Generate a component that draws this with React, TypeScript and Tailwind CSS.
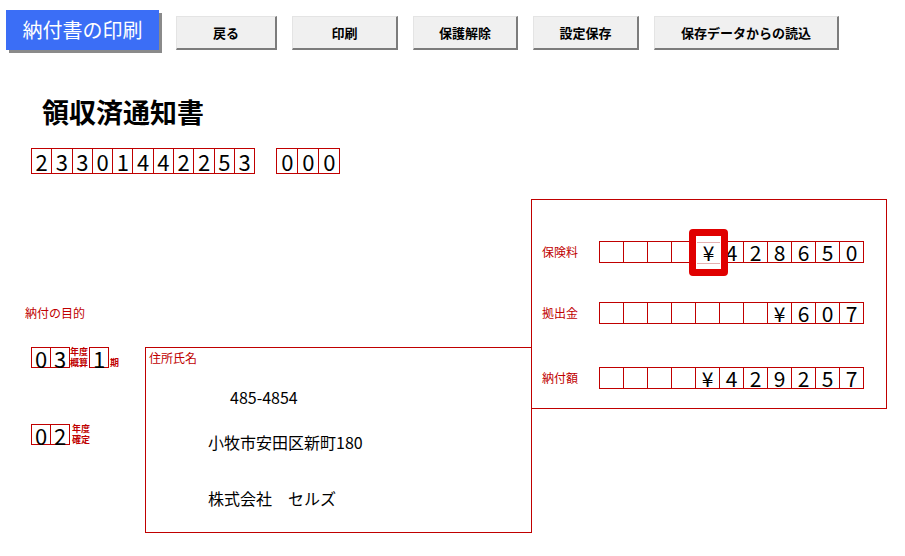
const jp = { fontFamily: '"Noto Sans CJK JP", "Noto Sans", sans-serif' };

function Cells({ values, w, h, size }: { values: string[]; w: string; h: string; size: string }) {
  return (
    <div className="flex">
      {values.map((v, i) => (
        <div
          key={i}
          className={`${w} ${h} ${size} -ml-px first:ml-0 border border-[#c00000] flex items-center justify-center leading-none text-black`}
        >
          {v}
        </div>
      ))}
    </div>
  );
}

const buttons = [
  { label: "戻る", w: "w-[101px]" },
  { label: "印刷", w: "w-[106px]" },
  { label: "保護解除", w: "w-[105px]" },
  { label: "設定保存", w: "w-[106px]" },
  { label: "保存データからの読込", w: "w-[185px]" },
];

function AmountRow({ label, values, mt, highlight }: { label: string; values: string[]; mt: string; highlight?: boolean }) {
  return (
    <div className={`${mt} flex items-center`}>
      <div className="w-[67px] pl-[10px] text-[12px] text-[#c00000] leading-none">{label}</div>
      <div className="relative">
        <Cells values={values} w="w-[25px]" h="h-[22px]" size="text-[21px]" />
        {highlight && (
          <div className="absolute left-[90px] top-[-12px] w-[39px] h-[47px] rounded-[4px] border-[7px] border-[#e00000] bg-white flex items-center justify-center">
            <div className="w-[23px] h-[22px] border-y border-[#e5b0b0] flex items-center justify-center text-[21px] leading-none">¥</div>
          </div>
        )}
      </div>
    </div>
  );
}

function Tiny({ lines, className }: { lines: string[]; className?: string }) {
  return (
    <div className={`font-['Liberation_Sans','Noto_Sans_CJK_JP',sans-serif] text-[9px] leading-[10.5px] font-bold text-[#c00000] ${className ?? ""}`}>
      {lines.map((l) => (
        <div key={l}>{l}</div>
      ))}
    </div>
  );
}

export default function App() {
  return (
    <div className="w-[905px] h-[556px] bg-white overflow-hidden" style={jp}>
      <div className="flex items-start pt-[10px] pl-[6px]">
        <div className="w-[153px] h-[40px] bg-[#3b6ef6] shadow-[3px_3px_0_#8a8a8a] flex items-center justify-center text-white text-[20px]">
          納付書の印刷
        </div>
        <div className="flex gap-[15px] ml-[17px] mt-[6px]">
          {buttons.map((b) => (
            <div
              key={b.label}
              className={`${b.w} h-[34px] bg-[#f0f0f0] border-t border-l border-[#e4e4e4] border-r-2 border-b-2 border-r-[#7c7c7c] border-b-[#7c7c7c] flex items-center justify-center text-[13px] font-bold text-black`}
            >
              {b.label}
            </div>
          ))}
        </div>
      </div>

      <div className="mt-[47px] pl-[42px] text-[27px] leading-[30px] font-bold text-black">領収済通知書</div>

      <div className="mt-[21px] pl-[31px] flex gap-[21px]">
        <Cells values={"23301442253".split("")} w="w-[21.3px]" h="h-[26px]" size="text-[22px]" />
        <Cells values={["0", "0", "0"]} w="w-[22px]" h="h-[26px]" size="text-[22px]" />
      </div>

      <div className="mt-[25px] flex items-start">
        <div className="w-[532px] pt-[106px]">
          <div className="pl-[25px] text-[12px] leading-[16px] text-[#c00000]">納付の目的</div>
          <div className="mt-[26px] flex">
            <div className="w-[145px] pl-[31px]">
              <div className="flex items-start">
                <Cells values={["0", "3"]} w="w-[20px]" h="h-[21px]" size="text-[22px]" />
                <Tiny lines={["年度", "概算"]} className="w-[19px]" />
                <Cells values={["1"]} w="w-[20px]" h="h-[21px]" size="text-[22px]" />
                <Tiny lines={["期"]} className="self-end ml-px" />
              </div>
              <div className="mt-[56px] flex items-start">
                <Cells values={["0", "2"]} w="w-[20px]" h="h-[21px]" size="text-[22px]" />
                <Tiny lines={["年度", "確定"]} className="ml-[2px]" />
              </div>
            </div>
            <div className="w-[387px] h-[186px] border border-[#c00000] pl-[3px] pt-[3px]">
              <div className="text-[12px] leading-[14px] text-[#c00000]">住所氏名</div>
              <div className="mt-[22px] pl-[81px] text-[16px] leading-[20px] text-black">485-4854</div>
              <div className="mt-[25px] pl-[59px] text-[16px] leading-[20px] text-black">小牧市安田区新町180</div>
              <div className="mt-[36px] pl-[59px] text-[16px] leading-[20px] text-black">株式会社　セルズ</div>
            </div>
          </div>
        </div>

        <div className="w-[356px] h-[210px] -ml-px border border-[#c00000]">
          <AmountRow label="保険料" mt="mt-[41px]" highlight values={["", "", "", "", "¥", "4", "2", "8", "6", "5", "0"]} />
          <AmountRow label="拠出金" mt="mt-[39px]" values={["", "", "", "", "", "", "", "¥", "6", "0", "7"]} />
          <AmountRow label="納付額" mt="mt-[43px]" values={["", "", "", "", "¥", "4", "2", "9", "2", "5", "7"]} />
        </div>
      </div>
    </div>
  );
}
